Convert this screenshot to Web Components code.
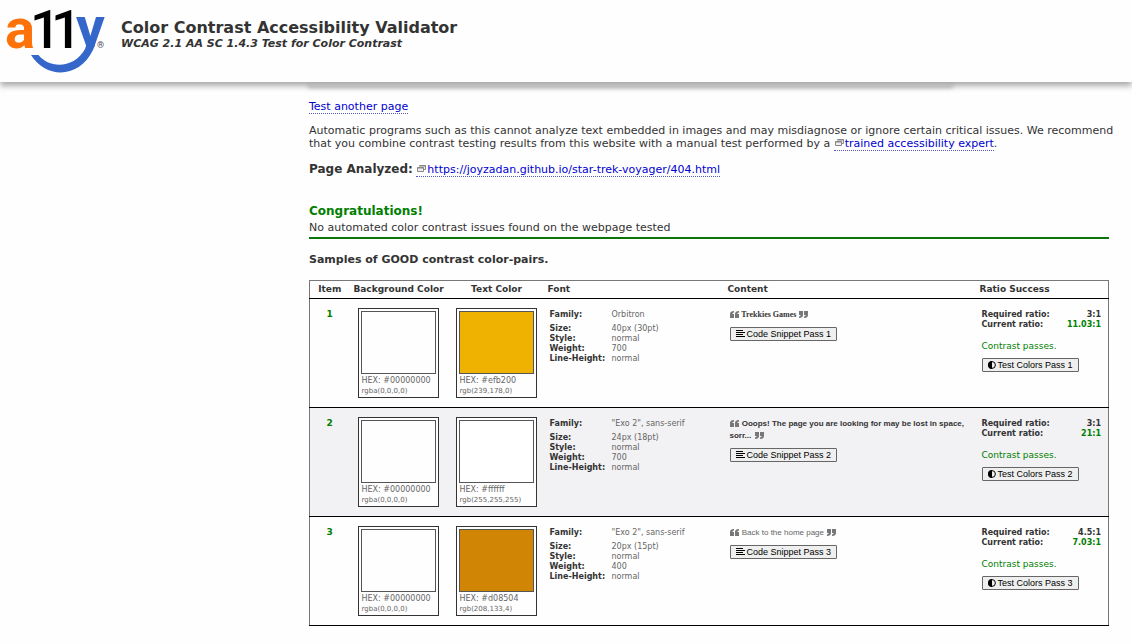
<!DOCTYPE html>
<html lang="en">
<head>
<meta charset="utf-8">
<title>Color Contrast Accessibility Validator</title>
<style>
  body { margin: 0; background: #fefefe; color: #333; font: 11px/13px Verdana, "DejaVu Sans", sans-serif; }
</style>
</head>
<body>
<site-header>
  <site-logo slot="logo"></site-logo>
  <span slot="title">Color Contrast Accessibility Validator</span>
  <span slot="subtitle">WCAG 2.1 AA SC 1.4.3 Test for Color Contrast</span>
</site-header>
<report-page></report-page>

<script>
const define = (name, html, init) => {
  const template = document.createElement('template');
  template.innerHTML = html;
  customElements.define(name, class extends HTMLElement {
    constructor() {
      super();
      this.attachShadow({ mode: 'open' }).append(template.content.cloneNode(true));
    }
    connectedCallback() { if (init) init(this, this.shadowRoot); }
  });
};

define('site-logo', `
  <style>
    :host { display: block; width: 106px; height: 76px; }
    svg { display: block; overflow: visible; }
    text { font-family: Roboto, sans-serif; font-weight: bold; }
  </style>
  <svg width="106" height="76" viewBox="0 0 106 76" role="img" aria-label="a11y logo">
    <clipPath id="arms"><path d="M70 0H106V47H70z"/></clipPath>
    <text font-size="56"><tspan x="5" y="48" fill="#fd7209">a</tspan><tspan x="30 51" y="48" font-size="54" fill="#000" font-weight="500">11</tspan></text>
    <text x="76" y="47" font-size="57" fill="#3567cb" clip-path="url(#arms)">y</text>
    <path d="M31 55H38.500C49 68.500 74 69 85 49L87 43L95 45L93 50C79 79 46 79 31 55Z" fill="#3567cb"/>
    <text x="97" y="48" font-size="9" fill="#555">®</text>
  </svg>`);

define('site-header', `
  <style>
    :host { display: block; position: relative; z-index: 1; }
    header { display: flex; gap: 15px; height: 82px; background: #fefefe; box-shadow: 0 4px 6px #aaa; }
    h1 { margin: 18px 0 0; font-size: 16px; line-height: 20px; }
    p { margin: 0; font-size: 11px; line-height: 12px; font-weight: bold; font-style: italic; }
  </style>
  <header>
    <slot name="logo"></slot>
    <div><h1><slot name="title"></slot></h1><p><slot name="subtitle"></slot></p></div>
  </header>`);

define('text-link', `
  <style>
    :host { display: inline; }
    a { color: #0000d0; text-decoration: none; border-bottom: 1px dotted #5555bb; }
    svg { display: none; }
    :host([external]) svg { display: inline; margin: 0 1px 0 1px; }
  </style>
  <a><svg width="9" height="8" viewBox="0 0 9 8" aria-hidden="true"><path d="M2.5.5h6v4h-2M.5 2.5h6v4h-6z" fill="#eee" stroke="#888"/><path d="M2 1h7M0 3h7" stroke="#888"/></svg><slot></slot></a>`,
  (el, root) => { root.querySelector('a').href = el.getAttribute('href'); });

define('color-swatch', `
  <style>
    :host { display: block; box-sizing: border-box; width: 81px; height: 90px; padding: 2px; border: 1px solid #333; background: #fefefe; color: #666; font-size: 8px; line-height: 10px; text-align: left; }
    .chip { box-sizing: border-box; height: 63px; margin-bottom: 2px; border: 1px solid #555; }
    p { margin: 0 0 0 1px; white-space: nowrap; }
    .rgb { font-size: 7px; }
  </style>
  <div class="chip"></div><p class="hex"></p><p class="rgb"></p>`,
  (el, root) => {
    const hex = el.getAttribute('hex');
    root.querySelector('.chip').style.background = hex;
    root.querySelector('.hex').textContent = 'HEX: ' + hex;
    root.querySelector('.rgb').textContent = el.getAttribute('rgb');
  });

define('font-facts', `
  <style>
    :host { display: block; font-size: 8px; line-height: 10px; }
    dl { display: grid; grid-template-columns: 58px 1fr; column-gap: 4px; margin: 0; }
    dt { font-weight: bold; }
    dd { margin: 0; color: #666; }
    dt:first-child, dt:first-child + dd { margin-bottom: 4px; }
  </style>
  <dl></dl>`,
  (el, root) => {
    const values = [el.getAttribute('family'), el.getAttribute('size'), 'normal', el.getAttribute('weight'), 'normal'];
    ['Family:', 'Size:', 'Style:', 'Weight:', 'Line-Height:'].forEach((label, i) => {
      const dt = document.createElement('dt'), dd = document.createElement('dd');
      dt.textContent = label; dd.textContent = values[i];
      root.querySelector('dl').append(dt, dd);
    });
  });

define('icon-button', `
  <style>
    :host { display: block; }
    button { display: flex; align-items: center; gap: 2px; height: 14px; margin: 0; padding: 0 5px; border: 1px solid #666; border-radius: 1px; background: #efefef; color: #000; font: 9px/12px "Liberation Sans", Arial, sans-serif; white-space: nowrap; }
    svg { display: none; flex: none; }
    :host([icon="lines"]) .lines, :host([icon="contrast"]) .contrast { display: block; }
  </style>
  <button type="button">
    <svg class="lines" width="9" height="8" viewBox="0 0 9 8" aria-hidden="true"><path d="M0 .5h7M0 2.5h9M0 4.5h7M0 6.5h9" stroke="#000"/></svg>
    <svg class="contrast" width="8" height="8" viewBox="0 0 8 8" aria-hidden="true"><circle cx="4" cy="4" r="3.4" fill="none" stroke="#000"/><path d="M4 0a4 4 0 0 0 0 8z"/></svg>
    <slot></slot>
  </button>`);

define('content-quote', `
  <style>
    :host { display: block; margin-bottom: 6px; padding-top: 1px; color: #333; font: 8px/12px "Liberation Sans", Arial, sans-serif; }
    :host([look="serif"]) { font-family: "Liberation Serif", "Times New Roman", serif; font-weight: bold; }
    :host([look="bold"]) { font-weight: bold; }
    :host([look="plain"]) { color: #666; }
    svg { margin-right: 1px; fill: #777; vertical-align: -1px; }
    slot + svg { margin: 0 0 0 1px; }
  </style>
  <svg width="9" height="7" viewBox="0 0 9 7" aria-hidden="true"><path d="M4 0v1.4Q2.4 1.6 2.4 3H4v4H0V3Q0 .2 4 0M9 0v1.4Q7.4 1.6 7.4 3H9v4H5V3Q5 .2 9 0"/></svg>
  <slot></slot>
  <svg width="9" height="7" viewBox="0 0 9 7" aria-hidden="true"><path d="M0 7V5.6Q1.6 5.4 1.6 4H0V0H4V4Q4 6.8 0 7M5 7V5.6Q6.6 5.4 6.6 4H5V0H9V4Q9 6.8 5 7"/></svg>`);

define('ratio-result', `
  <style>
    :host { display: block; margin-right: 7px; font-size: 8px; line-height: 10px; font-weight: bold; }
    dl { display: grid; grid-template-columns: 1fr auto; margin: 0 0 10px; }
    dd { margin: 0; text-align: right; }
    dd.current, p { color: #008000; }
    p { margin: 0 0 6px; font-weight: normal; font-size: 9px; line-height: 12px; }
  </style>
  <dl><dt>Required ratio:</dt><dd class="required"></dd><dt>Current ratio:</dt><dd class="current"></dd></dl>
  <p>Contrast passes.</p>
  <slot></slot>`,
  (el, root) => {
    root.querySelector('.required').textContent = el.getAttribute('required');
    root.querySelector('.current').textContent = el.getAttribute('current');
  });

const samples = [
  { hex: '#efb200', rgb: 'rgb(239,178,0)', family: 'Orbitron', size: '40px (30pt)', weight: 700, look: 'serif', text: 'Trekkies Games', required: '3:1', current: '11.03:1' },
  { hex: '#ffffff', rgb: 'rgb(255,255,255)', family: '&quot;Exo 2&quot;, sans-serif', size: '24px (18pt)', weight: 700, look: 'bold', text: 'Ooops! The page you are looking for may be lost in space, sorr...', required: '3:1', current: '21:1' },
  { hex: '#d08504', rgb: 'rgb(208,133,4)', family: '&quot;Exo 2&quot;, sans-serif', size: '20px (15pt)', weight: 400, look: 'plain', text: 'Back to the home page', required: '4.5:1', current: '7.03:1' }
];

define('contrast-table', `
  <style>
    :host { display: block; }
    table { width: 100%; table-layout: fixed; border-collapse: collapse; border: 1px solid #777; }
    th { height: 16px; padding: 0 2px 1px; font-size: 9px; line-height: 12px; text-align: left; white-space: nowrap; }
    th:nth-child(-n+3) { padding: 0 0 1px; text-align: center; }
    tr { border-bottom: 1px solid #000; }
    td { height: 90px; padding: 9px 0 9px 4px; vertical-align: top; }
    td:nth-child(2), td:nth-child(3) { padding-left: 8px; }
    td.item { padding: 10px 0 8px; color: #008000; font-size: 9px; line-height: 10px; font-weight: bold; text-align: center; }
    tbody tr:nth-child(even) { background: #f2f1f3; }
    font-facts, ratio-result { margin-top: 2px; }
  </style>
  <table>
    <colgroup><col style="width:40px"><col style="width:98px"><col style="width:98px"><col style="width:180px"><col><col style="width:131px"></colgroup>
    <thead><tr><th>Item</th><th>Background Color</th><th>Text Color</th><th>Font</th><th>Content</th><th>Ratio Success</th></tr></thead>
    <tbody></tbody>
  </table>`,
  (el, root) => {
    root.querySelector('tbody').innerHTML = samples.map((s, i) => `
      <tr>
        <td class="item">${i + 1}</td>
        <td><color-swatch hex="#00000000" rgb="rgba(0,0,0,0)"></color-swatch></td>
        <td><color-swatch hex="${s.hex}" rgb="${s.rgb}"></color-swatch></td>
        <td><font-facts family="${s.family}" size="${s.size}" weight="${s.weight}"></font-facts></td>
        <td><content-quote look="${s.look}">${s.text}</content-quote><icon-button icon="lines">Code Snippet Pass ${i + 1}</icon-button></td>
        <td><ratio-result required="${s.required}" current="${s.current}"><icon-button icon="contrast">Test Colors Pass ${i + 1}</icon-button></ratio-result></td>
      </tr>`).join('');
  });

define('report-page', `
  <style>
    :host { display: block; padding: 0 23px 18px 309px; }
    .panel { height: 4px; margin: 0 157px 14px 0; background: #ddd; box-shadow: 0 1px 4px 1px #bbb; }
    p { margin: 0 0 11px; }
    .intro { margin-right: -20px; }
    .analyzed { margin-bottom: 25px; line-height: 17px; }
    .analyzed strong { font-size: 12px; }
    h2 { margin: 0; color: #008000; font-size: 12px; line-height: 17px; }
    .result { margin-bottom: 14px; padding: 1px 0 3px; border-bottom: 2px solid #0b750b; }
    h3 { margin: 0 0 13px; font-size: 11px; line-height: 14px; }
  </style>
  <main>
    <div class="panel"></div>
    <p><text-link href="#test">Test another page</text-link></p>
    <p class="intro">Automatic programs such as this cannot analyze text embedded in images and may misdiagnose or ignore certain critical issues. We recommend that you combine contrast testing results from this website with a manual test performed by a <text-link external href="#expert">trained accessibility expert</text-link>.</p>
    <p class="analyzed"><strong>Page Analyzed:</strong> <text-link external href="https://joyzadan.github.io/star-trek-voyager/404.html">https://joyzadan.github.io/star-trek-voyager/404.html</text-link></p>
    <h2>Congratulations!</h2>
    <p class="result">No automated color contrast issues found on the webpage tested</p>
    <h3>Samples of GOOD contrast color-pairs.</h3>
    <contrast-table></contrast-table>
  </main>`);
</script>
</body>
</html>
